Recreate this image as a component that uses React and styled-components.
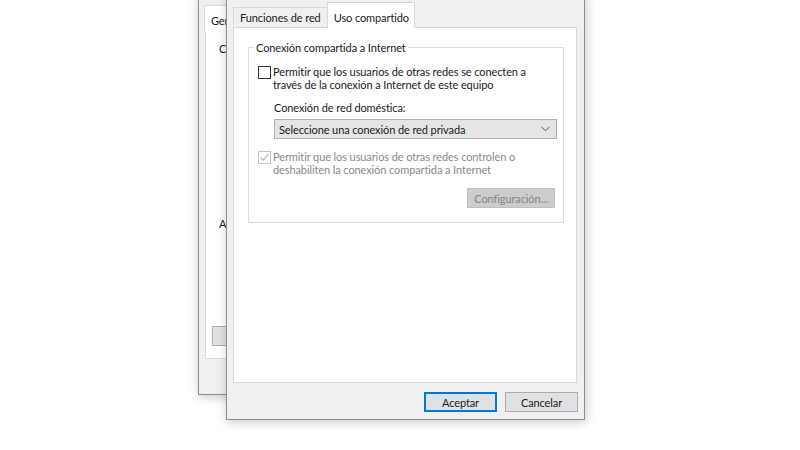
import React from 'react';
import styled, { createGlobalStyle, css } from 'styled-components';

const GlobalStyle = createGlobalStyle`
    html, body {
        margin: 0;
        padding: 0;
        background: #ffffff;
    }
    body {
        font-family: Lato, "Liberation Sans", sans-serif;
        font-size: 11px;
        letter-spacing: -0.1px;
        color: #1a1a1a;
    }
`;

const Desktop = styled.div`
    position: relative;
    width: 800px;
    height: 450px;
    overflow: hidden;
    background: #ffffff;
`;

// dialogs sit on the desktop like windows, so they keep their own place
const Window = styled.div`
    position: absolute;
    left: ${p => p.$left}px;
    top: ${p => p.$top}px;
    width: ${p => p.$width}px;
    height: ${p => p.$height}px;
    z-index: ${p => p.$z || 1};
    box-sizing: border-box;
    display: flex;
    flex-direction: column;
    background: #f0f0f0;
    border: 1px solid #8c8c8c;
    box-shadow: 1px 2px 10px rgba(0, 0, 0, 0.22);
`;

const FrontWindow = styled(Window)`
    padding: 9px 7px 7px 6px;
`;

// only its left strip shows behind the front dialog
const BackWindow = styled(Window)`
    padding: 16px 0 35px 6px;
    overflow: hidden;
    border-right: none;
`;

const TabStrip = styled.div`
    display: flex;
    align-items: flex-end;
    height: 26px;
    margin-bottom: -1px;
    position: relative;
    z-index: 1;
`;

const Tab = styled.div`
    box-sizing: border-box;
    display: flex;
    align-items: center;
    white-space: nowrap;
    border: 1px solid #d9d9d9;
    ${p => p.$active ? css`
        height: 26px;
        padding: 3px 5px 0 6px;
        margin-left: -1px;
        background: #ffffff;
        border-bottom: none;
    ` : css`
        height: 20px;
        padding: 0 6px;
        margin-bottom: 1px;
        background: #f0f0f0;
        border-bottom: none;
    `}
`;

const TabPanel = styled.div`
    flex: 1;
    display: flex;
    flex-direction: column;
    background: #ffffff;
    border: 1px solid #d9d9d9;
`;

const BackPanel = styled(TabPanel)`
    padding: 11px 0 0 13px;
    border-right: none;
    overflow: hidden;
`;

const BackLabel = styled.div`
    line-height: 13px;
    white-space: nowrap;
    margin-top: ${p => p.$gap || 0}px;
`;

const GroupBox = styled.fieldset`
    margin: 13px 12px 0 14px;
    padding: 11px 6px 14px 9px;
    border: 1px solid #dcdcdc;
    min-width: 0;
`;

const Legend = styled.legend`
    margin-left: -4px;
    padding: 0 2px;
    line-height: 13px;
`;

const OptionRow = styled.div`
    display: flex;
    align-items: flex-start;
    gap: 2px;
    margin-top: ${p => p.$gap || 0}px;
`;

const CheckBox = styled.div`
    box-sizing: border-box;
    width: 13px;
    height: 13px;
    margin-top: 1px;
    flex: none;
    display: flex;
    align-items: center;
    justify-content: center;
    background: #ffffff;
    border: 1px solid ${p => p.$disabled ? '#c4c4c4' : '#333333'};
`;

const OptionText = styled.div`
    line-height: 13px;
    color: ${p => p.$disabled ? '#8a8a8a' : '#1a1a1a'};
`;

const FieldLabel = styled.div`
    line-height: 13px;
    margin: 10px 0 5px 16px;
`;

const ComboBox = styled.div`
    box-sizing: border-box;
    height: 20px;
    margin-left: 16px;
    padding: 0 6px 0 4px;
    display: flex;
    align-items: center;
    justify-content: space-between;
    background: #e5e5e5;
    border: 1px solid #adadad;
`;

const GroupFooter = styled.div`
    display: flex;
    justify-content: flex-end;
    margin: 12px 2px 0 0;
`;

const ButtonRow = styled.div`
    display: flex;
    justify-content: flex-end;
    gap: 8px;
    margin: 9px -1px 0 0;
`;

const PushButton = styled.div`
    box-sizing: border-box;
    height: 20px;
    min-width: ${p => p.$width || 73}px;
    padding: 0 6px;
    display: flex;
    align-items: center;
    justify-content: center;
    background: #e1e1e1;
    border: 1px solid #adadad;
    white-space: nowrap;
    ${p => p.$default && css`
        border-color: #0078d7;
        box-shadow: inset 0 0 0 1px #0078d7;
    `}
    ${p => p.$disabled && css`
        background: #cccccc;
        border-color: #bfbfbf;
        color: #858585;
    `}
`;

const BackButton = styled(PushButton)`
    align-self: flex-start;
    margin: 96px 0 0 -7px;
    flex: none;
`;

const Chevron = () => (
    <svg width="9" height="6" viewBox="0 0 9 6">
        <path d="M0.5 0.8 L4.5 4.8 L8.5 0.8" fill="none" stroke="#555" strokeWidth="1" />
    </svg>
);

const Check = () => (
    <svg width="11" height="11" viewBox="0 0 11 11">
        <path d="M1.5 5.5 L4.2 8.2 L9.5 2.2" fill="none" stroke="#b4b4b4" strokeWidth="1.1" />
    </svg>
);

export default function App() {
    return (
        <>
            <GlobalStyle />
            <Desktop>
                <BackWindow $left={198} $top={-12} $width={40} $height={407}>
                    <TabStrip>
                        <Tab $active>General</Tab>
                    </TabStrip>
                    <BackPanel>
                        <BackLabel>Conexión</BackLabel>
                        <BackLabel $gap={162}>Actividad</BackLabel>
                        <BackButton $width={90}>Propiedades</BackButton>
                    </BackPanel>
                </BackWindow>

                <FrontWindow $left={226} $top={-8} $width={359} $height={428} $z={2}>
                    <TabStrip>
                        <Tab>Funciones de red</Tab>
                        <Tab $active>Uso compartido</Tab>
                    </TabStrip>
                    <TabPanel>
                        <GroupBox>
                            <Legend>Conexión compartida a Internet</Legend>
                            <OptionRow>
                                <CheckBox />
                                <OptionText>
                                    Permitir que los usuarios de otras redes se conecten a<br />
                                    través de la conexión a Internet de este equipo
                                </OptionText>
                            </OptionRow>
                            <FieldLabel>Conexión de red doméstica:</FieldLabel>
                            <ComboBox>
                                <span>Seleccione una conexión de red privada</span>
                                <Chevron />
                            </ComboBox>
                            <OptionRow $gap={11}>
                                <CheckBox $disabled>
                                    <Check />
                                </CheckBox>
                                <OptionText $disabled>
                                    Permitir que los usuarios de otras redes controlen o<br />
                                    deshabiliten la conexión compartida a Internet
                                </OptionText>
                            </OptionRow>
                            <GroupFooter>
                                <PushButton $disabled $width={86}>Configuración...</PushButton>
                            </GroupFooter>
                        </GroupBox>
                    </TabPanel>
                    <ButtonRow>
                        <PushButton $default>Aceptar</PushButton>
                        <PushButton>Cancelar</PushButton>
                    </ButtonRow>
                </FrontWindow>
            </Desktop>
        </>
    );
}
